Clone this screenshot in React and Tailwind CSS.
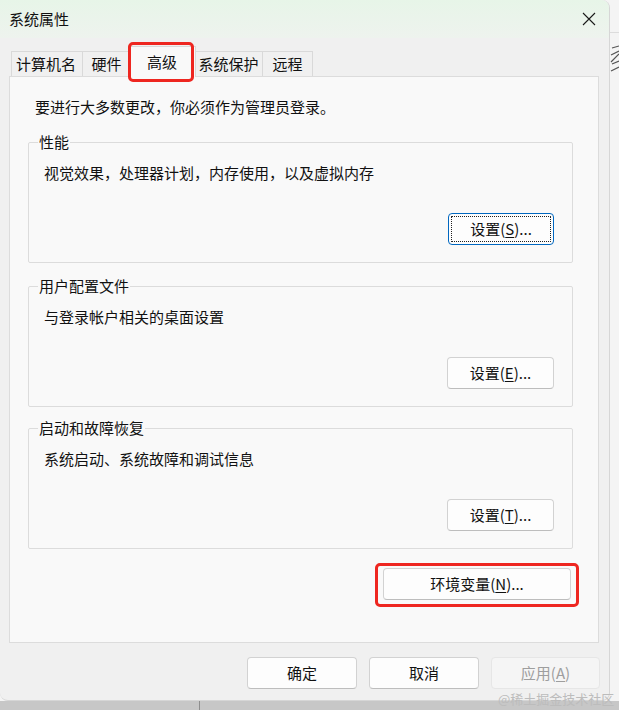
import React from "react";

function Btn({ children, w, focused, disabled }) {
  const base =
    "relative h-[32px] rounded-[4px] border flex items-center justify-center text-[15px] leading-[20px] shrink-0";
  const look = disabled
    ? " bg-[#f5f5f5] border-[#e6e6e6] text-[#9e9e9e]"
    : focused
    ? " bg-[#fdfdfd] border-[#0067c0] text-[#111]"
    : " bg-[#fdfdfd] border-[#d2d2d2] border-b-[#bdbdbd] text-[#111]";
  return (
    <div className={base + look + " " + w}>
      {focused && (
        <span className="absolute inset-[2px] border border-dotted border-[#222] rounded-[1px]" />
      )}
      {children}
    </div>
  );
}

function U({ children }) {
  return <span className="underline underline-offset-[2px]">{children}</span>;
}

function Group({ label, text, mt, button }) {
  return (
    <div
      className={
        "relative ml-[18px] w-[545px] h-[121px] border border-[#dcdcdc] rounded-[2px] flex flex-col pt-[20px] pl-[15px] pr-[18px] pb-[17px] " +
        mt
      }
    >
      <span className="absolute -top-[11px] left-[9px] px-[1px] bg-[#f9f9f9] leading-[20px]">
        {label}
      </span>
      <div className="leading-[20px]">{text}</div>
      <div className="mt-auto self-end">{button}</div>
    </div>
  );
}

export default function App() {
  return (
    <div className="relative w-[619px] h-[710px] overflow-hidden bg-[#c7c7c7] font-['Noto_Sans_CJK_SC',sans-serif] text-[15px] leading-[20px] text-[#111]">
      <div className="flex h-[701px] bg-[#f4f4f4]">
        {/* window */}
        <div className="w-[610px] h-[701px] flex flex-col bg-[#f0f0f0] rounded-tr-[8px] rounded-br-[8px] rounded-bl-[8px] border-r border-b border-[#d6d6d6] shrink-0">
          {/* title bar */}
          <div className="h-[38px] flex items-center justify-between pl-[9px] pr-[13px] bg-gradient-to-b from-[#e7f5e8] to-[#eef3ee] rounded-tr-[8px]">
            <span>系统属性</span>
            <svg width="14" height="14" viewBox="0 0 14 14">
              <path d="M1 1L13 13M13 1L1 13" stroke="#1a1a1a" strokeWidth="1.1" />
            </svg>
          </div>

          {/* tabs */}
          <div className="flex items-end h-[32px] mt-[6px] pl-[11px]">
            <div className="w-[71px] h-[25px] border-t border-l border-[#d9d9d9] bg-[#f0f0f0] flex items-center pl-[4px]">
              计算机名
            </div>
            <div className="w-[48px] h-[25px] border-t border-l border-[#d9d9d9] bg-[#f0f0f0] flex items-center justify-center">
              硬件
            </div>
            <div className="relative z-10 -mx-[2px] -mb-px w-[68px] h-[31px] bg-[#f9f9f9] border-t border-l border-r border-[#d9d9d9] flex justify-center pt-[5px]">
              高级
            </div>
            <div className="w-[68px] h-[25px] border-t border-l border-[#d9d9d9] bg-[#f0f0f0] flex items-center justify-center">
              系统保护
            </div>
            <div className="w-[51px] h-[25px] border-t border-l border-r border-[#d9d9d9] bg-[#f0f0f0] flex items-center justify-center">
              远程
            </div>
          </div>

          {/* panel */}
          <div className="relative ml-[9px] w-[590px] h-[567px] border border-[#dcdcdc] bg-[#f9f9f9] flex flex-col pt-[20px]">
            <div className="pl-[25px]">要进行大多数更改，你必须作为管理员登录。</div>

            <Group
              label="性能"
              mt="mt-[25px]"
              text="视觉效果，处理器计划，内存使用，以及虚拟内存"
              button={
                <Btn w="w-[106px]" focused>
                  设置(<U>S</U>)...
                </Btn>
              }
            />
            <Group
              label="用户配置文件"
              mt="mt-[23px]"
              text="与登录帐户相关的桌面设置"
              button={
                <Btn w="w-[107px]">
                  设置(<U>E</U>)...
                </Btn>
              }
            />
            <Group
              label="启动和故障恢复"
              mt="mt-[21px]"
              text="系统启动、系统故障和调试信息"
              button={
                <Btn w="w-[107px]">
                  设置(<U>T</U>)...
                </Btn>
              }
            />

            <div className="mt-[19px] ml-[373px]">
              <Btn w="w-[188px]">
                环境变量(<U>N</U>)...
              </Btn>
            </div>
          </div>

          {/* bottom buttons */}
          <div className="flex justify-end gap-[12px] pr-[9px] mt-[14px]">
            <Btn w="w-[110px]">确定</Btn>
            <Btn w="w-[110px]">取消</Btn>
            <Btn w="w-[109px]" disabled>
              应用(<U>A</U>)
            </Btn>
          </div>
        </div>

        {/* right desktop strip */}
        <div className="flex-1 flex flex-col bg-[#f4f4f4]">
          <div className="h-[32px]" />
          <div className="h-px bg-[#dcdcdc]" />
          <svg width="9" height="40" viewBox="0 0 9 40" className="mt-[12px]">
            <path d="M2 3L9 1M1 10L9 6M9 9L1 17M2 19L9 16M1 26L9 22" stroke="#555" strokeWidth="1.2" fill="none" />
          </svg>
        </div>
      </div>

      {/* bottom desktop strip */}
      <div className="flex h-[9px]">
        <div className="w-[199px]" />
        <div className="w-px bg-[#8e8e8e]" />
      </div>

      {/* annotation red boxes */}
      <div className="absolute left-[128px] top-[42px] w-[66px] h-[40px] border-[3px] border-[#ee2620] rounded-[5px] z-20" />
      <div className="absolute left-[375px] top-[563px] w-[204px] h-[44px] border-[3px] border-[#ee2620] rounded-[5px] z-20" />

      {/* watermark */}
      <div className="absolute left-[498px] top-[691px] text-[13px] leading-[16px] text-[#bcbcbc] z-20">
        @稀土掘金技术社区
      </div>
    </div>
  );
}
